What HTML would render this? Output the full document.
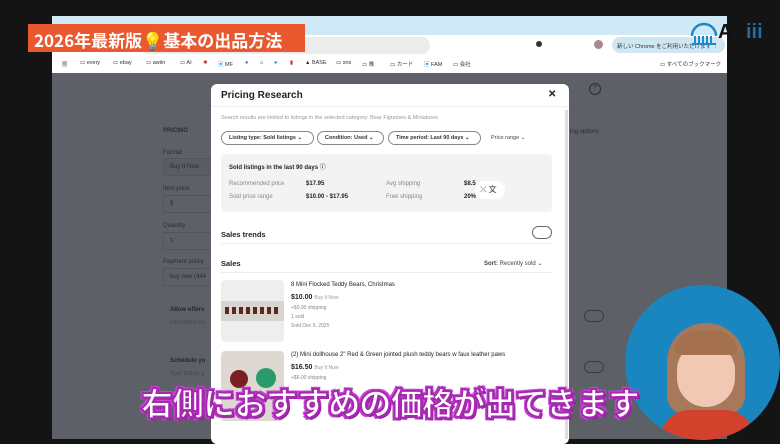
<!DOCTYPE html>
<html><head><meta charset="utf-8"><style>
*{margin:0;padding:0;box-sizing:border-box}
body{width:780px;height:439px;overflow:hidden;background:#141414;position:relative;font-family:"Liberation Sans","Noto Sans CJK JP",sans-serif}
.a{position:absolute}
.t{font-size:6px;color:#444;white-space:nowrap}
.g{color:#888}
.b{font-weight:bold;color:#222}
.chip{position:absolute;top:131px;height:14px;border:1px solid #888;border-radius:8px;font-size:5.5px;font-weight:bold;color:#333;padding:3px 7px;white-space:nowrap}
.bm{position:absolute;top:60px;font-size:5.5px;color:#333}
</style></head><body>
<div class="a" style="left:52px;top:16px;width:675px;height:423px;background:#5d6067"></div>
<div class="a" style="left:52px;top:16px;width:675px;height:19px;background:#cfe9f6"></div>
<div class="a" style="left:52px;top:35px;width:675px;height:38px;background:#fff"></div>
<div class="a" style="left:140px;top:37px;width:290px;height:17px;background:#ececec;border-radius:9px"></div>
<div class="a" style="left:536px;top:41px;width:6px;height:6px;background:#333;border-radius:50%"></div>
<div class="a" style="left:594px;top:40px;width:9px;height:9px;background:#a88;border-radius:50%"></div>
<div class="a" style="left:612px;top:37px;width:113px;height:16px;background:#cfe6f3;border-radius:8px;font-size:5.5px;color:#333;padding:5px 5px;white-space:nowrap">新しい Chrome をご利用いただけます ⋮</div>
<div class="bm" style="left:62px">▦</div>
<div class="bm" style="left:80px">▭ every</div>
<div class="bm" style="left:113px">▭ ebay</div>
<div class="bm" style="left:146px">▭ awiin</div>
<div class="bm" style="left:180px">▭ AI</div>
<div class="bm" style="left:203px;color:#c33">✱</div>
<div class="bm" style="left:218px"><span style="color:#38c">▣</span> MF</div>
<div class="bm" style="left:245px;color:#36c">●</div>
<div class="bm" style="left:260px">⌂</div>
<div class="bm" style="left:274px;color:#37c">●</div>
<div class="bm" style="left:290px;color:#c22">▮</div>
<div class="bm" style="left:305px">▲ BASE</div>
<div class="bm" style="left:336px">▭ sns</div>
<div class="bm" style="left:362px">▭ 株</div>
<div class="bm" style="left:390px">▭ カード</div>
<div class="bm" style="left:424px"><span style="color:#38c">▣</span> FAM</div>
<div class="bm" style="left:453px">▭ 会社</div>
<div class="bm" style="left:660px">▭ すべてのブックマーク</div>
<div class="a t" style="left:163px;top:128px;font-weight:bold;color:#2a2c30">PRICING</div>
<div class="a t" style="left:163px;top:150px;color:#2a2c30">Format</div>
<div class="a" style="left:163px;top:158px;width:50px;height:18px;border:1px solid #52555b;background:#5a5d64"></div>
<div class="a t" style="left:170px;top:164px;color:#2a2c30">Buy It Now</div>
<div class="a t" style="left:163px;top:186px;color:#2a2c30">Item price</div>
<div class="a" style="left:163px;top:195px;width:50px;height:18px;border:1px solid #52555b"></div>
<div class="a t" style="left:170px;top:201px;color:#2a2c30">$</div>
<div class="a t" style="left:163px;top:223px;color:#2a2c30">Quantity</div>
<div class="a" style="left:163px;top:232px;width:50px;height:18px;border:1px solid #52555b"></div>
<div class="a t" style="left:170px;top:238px;color:#2a2c30">1</div>
<div class="a t" style="left:163px;top:259px;color:#2a2c30">Payment policy</div>
<div class="a" style="left:163px;top:268px;width:50px;height:18px;border:1px solid #52555b"></div>
<div class="a t" style="left:170px;top:274px;color:#2a2c30">buy now (444</div>
<div class="a t" style="left:170px;top:307px;font-weight:bold;color:#25272b">Allow offers</div>
<div class="a t" style="left:170px;top:320px;color:#44474c">Interested bu</div>
<div class="a t" style="left:170px;top:358px;font-weight:bold;color:#25272b">Schedule yo</div>
<div class="a t" style="left:170px;top:371px;color:#44474c">Your listing g</div>
<div class="a t" style="left:570px;top:129px;color:#2a2c30">ing options</div>
<div class="a" style="left:589px;top:83px;width:12px;height:12px;border:1.5px solid #2a2c30;border-radius:50%;font-size:7px;text-align:center;color:#2a2c30;line-height:9px">?</div>
<div class="a" style="left:584px;top:310px;width:20px;height:12px;border:1px solid #3a3c40;border-radius:6px"></div>
<div class="a" style="left:584px;top:361px;width:20px;height:12px;border:1px solid #3a3c40;border-radius:6px"></div>
<div class="a" style="left:211px;top:84px;width:358px;height:360px;background:#fff;border-radius:6px"></div>
<div class="a" style="left:565px;top:110px;width:3px;height:329px;background:#ddd"></div>
<div class="a b" style="left:221px;top:90px;font-size:10px">Pricing Research</div>
<div class="a b" style="left:548px;top:89px;font-size:10px">✕</div>
<div class="a" style="left:211px;top:106px;width:358px;height:1px;background:#eee"></div>
<div class="a t g" style="left:221px;top:115px;font-size:5.5px;color:#999">Search results are limited to listings in the selected category: Bear Figurines &amp; Miniatures</div>
<div class="chip" style="left:221px;width:93px">Listing type: Sold listings ⌄</div>
<div class="chip" style="left:317px;width:67px">Condition: Used ⌄</div>
<div class="chip" style="left:388px;width:93px">Time period: Last 90 days ⌄</div>
<div class="a t" style="left:491px;top:135px;font-size:5.5px">Price range ⌄</div>
<div class="a" style="left:221px;top:154px;width:331px;height:58px;background:#f3f3f3;border-radius:4px"></div>
<div class="a t b" style="left:229px;top:162px">Sold listings in the last 90 days ⓘ</div>
<div class="a t g" style="left:229px;top:181px">Recommended price</div>
<div class="a t b" style="left:306px;top:181px">$17.95</div>
<div class="a t g" style="left:386px;top:181px">Avg shipping</div>
<div class="a t b" style="left:464px;top:181px">$8.5</div>
<div class="a t g" style="left:229px;top:194px">Sold price range</div>
<div class="a t b" style="left:306px;top:194px">$10.00 - $17.95</div>
<div class="a t g" style="left:386px;top:194px">Free shipping</div>
<div class="a t b" style="left:464px;top:194px">20%</div>
<div class="a" style="left:475px;top:181px;width:30px;height:18px;background:#fff;border-radius:9px;font-size:8px;color:#333;padding:3px 5px">⤫ 文</div>
<div class="a t b" style="left:221px;top:230px;font-size:7.5px">Sales trends</div>
<div class="a" style="left:532px;top:226px;width:20px;height:13px;border:1px solid #666;border-radius:7px"></div>
<div class="a" style="left:221px;top:243px;width:331px;height:1px;background:#eee"></div>
<div class="a t b" style="left:221px;top:259px;font-size:7.5px">Sales</div>
<div class="a t" style="left:484px;top:260px;font-size:6px"><b>Sort:</b> Recently sold ⌄</div>
<div class="a" style="left:221px;top:272px;width:331px;height:1px;background:#eee"></div>
<div class="a" style="left:221px;top:280px;width:63px;height:62px;background:#eee;border-radius:4px"></div>
<div class="a" style="left:221px;top:301px;width:63px;height:20px;background:#d8d4d0"></div>
<div class="a" style="left:225px;top:307px;width:55px;height:7px;background:repeating-linear-gradient(90deg,#5a2a20 0 4px,transparent 4px 7px)"></div>
<div class="a t" style="left:291px;top:282px;font-size:6px;color:#222">8 Mini Flocked Teddy Bears, Christmas</div>
<div class="a t b" style="left:291px;top:294px;font-size:7px">$10.00 <span style="font-weight:normal;color:#999;font-size:5px">Buy It Now</span></div>
<div class="a t g" style="left:291px;top:305px;font-size:5px">+$0.00 shipping</div>
<div class="a t g" style="left:291px;top:314px;font-size:5px">1 sold</div>
<div class="a t g" style="left:291px;top:323px;font-size:5px">Sold Dec 9, 2025</div>
<div class="a" style="left:221px;top:351px;width:63px;height:70px;background:#ddd8d2;border-radius:4px"></div>
<div class="a" style="left:230px;top:370px;width:18px;height:18px;background:#7a1f24;border-radius:50%"></div>
<div class="a" style="left:256px;top:368px;width:20px;height:20px;background:#2a9a6a;border-radius:50%"></div>
<div class="a t" style="left:291px;top:352px;font-size:6px;color:#222">(2) Mini dollhouse 2" Red &amp; Green jointed plush teddy bears w faux leather paws</div>
<div class="a t b" style="left:291px;top:364px;font-size:7px">$16.50 <span style="font-weight:normal;color:#999;font-size:5px">Buy It Now</span></div>
<div class="a t g" style="left:291px;top:375px;font-size:5px">+$6.00 shipping</div>
<svg class="a" style="left:689px;top:20px" width="30" height="26" viewBox="0 0 30 26"><path d="M3 16a12 12 0 0 1 24 0" fill="none" stroke="#1a8ac8" stroke-width="2.5"/><path d="M6 16v7M10 16v7M14 16v7M18 16v7M22 16v7" stroke="#1a8ac8" stroke-width="2"/><path d="M3 24h24" stroke="#1a8ac8" stroke-width="2"/></svg>
<div class="a" style="left:718px;top:21px;font-size:20px;font-weight:bold;color:#111">A</div>
<div class="a" style="left:746px;top:21px;font-size:20px;font-weight:bold;color:#1a6fa8">iii</div>
<div class="a" style="left:625px;top:285px;width:155px;height:155px;border-radius:50%;background:#1a86bf;overflow:hidden">
 <div class="a" style="left:42px;top:38px;width:78px;height:92px;background:#a8785a;border-radius:40px 40px 20px 20px"></div>
 <div class="a" style="left:52px;top:58px;width:58px;height:64px;background:#f0c8b4;border-radius:28px 28px 30px 30px"></div>
 <div class="a" style="left:50px;top:46px;width:62px;height:24px;background:#a5704e;border-radius:30px 30px 6px 6px"></div>
 <div class="a" style="left:35px;top:125px;width:95px;height:40px;background:#d2412c;border-radius:30px 30px 0 0"></div>
</div>
<div class="a" style="left:28px;top:24px;width:277px;height:28px;background:#e9582f;color:#fff;font-weight:bold;font-size:17px;padding:3px 6px;white-space:nowrap;font-family:'Noto Sans CJK JP',sans-serif">2026年最新版💡基本の出品方法</div>
<div class="a" style="left:141px;top:380px;font-size:32px;line-height:44px;font-weight:900;color:#fff;white-space:nowrap;font-family:'Noto Sans CJK JP',sans-serif;letter-spacing:-0.8px;-webkit-text-stroke:2px #a628b0;text-shadow:0 0 3px #e060e8,2px 2px 0 #8a1c9a,-2px -2px 0 #c040d0,2px -2px 0 #c040d0,-2px 2px 0 #c040d0">右側におすすめの価格が出てきます</div>
</body></html>
